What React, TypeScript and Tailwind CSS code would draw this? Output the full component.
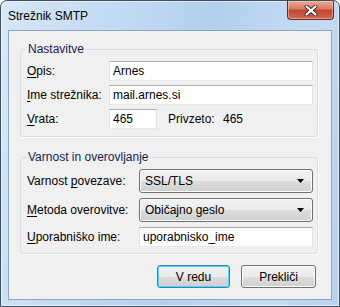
import type { ReactNode } from "react";

const font = "font-['Liberation_Sans',Arial,sans-serif] text-[12px] leading-[16px] text-black";

function Mn({ c }: { c: string }) {
  return <span className="underline underline-offset-[2px]">{c}</span>;
}

function TextBox({ value, className = "" }: { value: string; className?: string }) {
  return (
    <div
      className={`flex h-[20px] items-center border border-[#e2e3ea] border-t-[#abadb3] border-b-[#e3e9ef] bg-white pl-[3px] ${className}`}
    >
      {value}
    </div>
  );
}

function Combo({ value }: { value: string }) {
  return (
    <div className="flex h-[24px] items-center justify-between rounded-[3px] border border-[#707070] bg-[linear-gradient(#f2f2f2_0%,#ebebeb_50%,#dddddd_50%,#cfcfcf_100%)] pl-[5px] pr-[8px] shadow-[inset_0_0_0_1px_#fcfcfc]">
      <span>{value}</span>
      <svg width="7" height="4" viewBox="0 0 7 4">
        <path d="M0 0H7L3.5 4Z" fill="#000" />
      </svg>
    </div>
  );
}

function Group({ title, children, className = "" }: { title: string; children: ReactNode; className?: string }) {
  return (
    <fieldset
      className={`ml-[11px] w-[298px] rounded-[3px] border border-[#d5dfe5] pl-[6px] pr-[4px] shadow-[1px_1px_0_#fff] ${className}`}
    >
      <legend className="ml-0 px-[1px] leading-[16px] text-[#151c55]">{title}</legend>
      {children}
    </fieldset>
  );
}

function Button({ label, primary = false, className = "" }: { label: string; primary?: boolean; className?: string }) {
  return (
    <div
      className={`flex h-[23px] items-center justify-center rounded-[3px] border bg-[linear-gradient(#f2f2f2_0%,#ebebeb_50%,#dddddd_50%,#cfcfcf_100%)] ${
        primary
          ? "border-[#3c7fb1] shadow-[inset_0_0_0_1px_#48d8fb]"
          : "border-[#707070] shadow-[inset_0_0_0_1px_#fcfcfc]"
      } ${className}`}
    >
      {label}
    </div>
  );
}

export default function App() {
  return (
    <div className={`${font} h-[307px] w-[340px] bg-white`}>
      <div className="flex h-[307px] w-[340px] flex-col rounded-t-[7px] border border-[#3b4e63] bg-[linear-gradient(100deg,#d6e7f8_0%,#c3daf2_30%,#b4cfec_55%,#c4dbf3_80%,#b9d3ee_100%)] shadow-[inset_0_0_0_1px_rgba(255,255,255,0.55)]">
        {/* title bar */}
        <div className="flex h-[29px] items-start justify-between">
          <span className="ml-[7px] mt-[7px] text-[#000]">Strežnik SMTP</span>
          <div className="mr-[5px] flex h-[19px] w-[47px] items-center justify-center rounded-b-[4px] border border-t-0 border-[#6d2a20] bg-[linear-gradient(#e9a895_0%,#d77a63_45%,#c4452d_50%,#cf6a50_100%)] shadow-[inset_0_0_0_1px_rgba(255,220,210,0.45)]">
            <svg width="14" height="11" viewBox="0 0 14 11">
              <path d="M2.5 1.5L11.5 9.5M11.5 1.5L2.5 9.5" stroke="#4a2a25" strokeWidth="4" strokeLinecap="round" />
              <path d="M2.5 1.5L11.5 9.5M11.5 1.5L2.5 9.5" stroke="#fff" strokeWidth="2.2" strokeLinecap="round" />
            </svg>
          </div>
        </div>

        {/* client area */}
        <div className="mx-[7px] flex h-[270px] flex-col border border-[#8ea6c1] bg-[#f0f0f0]">
          <Group title="Nastavitve" className="mt-[10px] pb-[7px] pt-[4px]">
            <div className="grid grid-cols-[82px_1fr] items-center gap-y-[4px]">
              <span>
                <Mn c="O" />
                pis:
              </span>
              <TextBox value="Arnes" />
              <span>
                <Mn c="I" />
                me strežnika:
              </span>
              <TextBox value="mail.arnes.si" />
              <span>
                <Mn c="V" />
                rata:
              </span>
              <div className="flex items-center">
                <TextBox value="465" className="w-[48px]" />
                <span className="ml-[11px] w-[55px]">Privzeto:</span>
                <span>465</span>
              </div>
            </div>
          </Group>

          <Group title="Varnost in overovljanje" className="mt-[12px] pb-[6px] pt-[4px]">
            <div className="grid grid-cols-[112px_1fr] items-center gap-y-[5px]">
              <span>
                Varnost <Mn c="p" />
                ovezave:
              </span>
              <Combo value="SSL/TLS" />
              <span>
                <Mn c="M" />
                etoda overovitve:
              </span>
              <Combo value="Običajno geslo" />
              <span>
                <Mn c="U" />
                porabniško ime:
              </span>
              <TextBox value="uporabnisko_ime" />
            </div>
          </Group>

          <div className="mr-[15px] mt-[11px] flex justify-end gap-[11px]">
            <Button label="V redu" primary className="w-[73px]" />
            <Button label="Prekliči" className="w-[75px]" />
          </div>
        </div>
      </div>
    </div>
  );
}
